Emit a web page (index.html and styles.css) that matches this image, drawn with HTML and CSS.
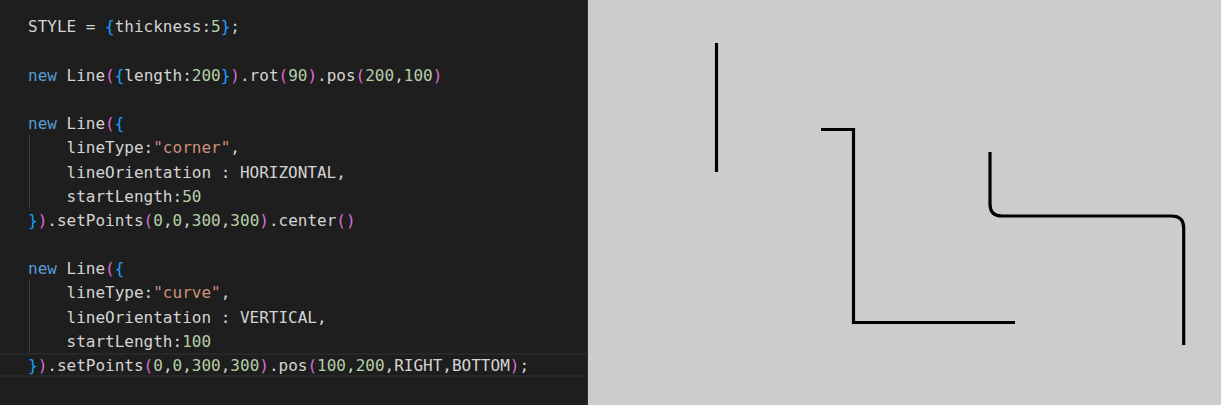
FILE: index.html
```html
<!DOCTYPE html>
<html>
<head>
<meta charset="utf-8">
<link rel="stylesheet" href="styles.css">
</head>
<body>
<div class="app">
  <div class="editor">
    <div class="line">STYLE = <span class="b2">{</span>thickness:<span class="n">5</span><span class="b2">}</span>;</div>
    <div class="line"></div>
    <div class="line"><span class="k">new</span> Line<span class="b1">(</span><span class="b2">{</span>length:<span class="n">200</span><span class="b2">}</span><span class="b1">)</span>.rot<span class="b1">(</span><span class="n">90</span><span class="b1">)</span>.pos<span class="b1">(</span><span class="n">200</span>,<span class="n">100</span><span class="b1">)</span></div>
    <div class="line"></div>
    <div class="line"><span class="k">new</span> Line<span class="b1">(</span><span class="b2">{</span></div>
    <div class="line guide">    lineType:<span class="s">"corner"</span>,</div>
    <div class="line guide">    lineOrientation : HORIZONTAL,</div>
    <div class="line guide">    startLength:<span class="n">50</span></div>
    <div class="line"><span class="b2">}</span><span class="b1">)</span>.setPoints<span class="b1">(</span><span class="n">0</span>,<span class="n">0</span>,<span class="n">300</span>,<span class="n">300</span><span class="b1">)</span>.center<span class="b1">()</span></div>
    <div class="line"></div>
    <div class="line"><span class="k">new</span> Line<span class="b1">(</span><span class="b2">{</span></div>
    <div class="line guide">    lineType:<span class="s">"curve"</span>,</div>
    <div class="line guide">    lineOrientation : VERTICAL,</div>
    <div class="line guide">    startLength:<span class="n">100</span></div>
    <div class="line current"><span class="b2">}</span><span class="b1">)</span>.setPoints<span class="b1">(</span><span class="n">0</span>,<span class="n">0</span>,<span class="n">300</span>,<span class="n">300</span><span class="b1">)</span>.pos<span class="b1">(</span><span class="n">100</span>,<span class="n">200</span>,RIGHT,BOTTOM<span class="b1">)</span>;</div>
  </div>
  <div class="stage">
    <svg class="drawing" width="633" height="405" viewBox="0 0 633 405">
      <g fill="none" stroke="#000" stroke-width="3.2">
        <path d="M128.5 43 V172" stroke-linecap="butt"/>
        <path d="M233 129.5 H265.5 V322.5 H427" stroke-linejoin="miter"/>
        <path d="M402 152 V204 Q402 216 414 216 H583.7 Q595.7 216 595.7 228 V345"/>
      </g>
    </svg>
  </div>
</div>
</body>
</html>
```

FILE: styles.css
```css
html, body {
  margin: 0;
  padding: 0;
  background: #1e1e1e;
}

.app {
  display: flex;
  width: 1221px;
  height: 405px;
  overflow: hidden;
}

.editor {
  width: 587px;
  flex: 0 0 587px;
  background: #1e1e1e;
  border-right: 1px solid #2e2e2e;
  padding-top: 14.4px;
  box-sizing: content-box;
  font-family: "DejaVu Sans Mono", "Liberation Mono", monospace;
  font-size: 16px;
  color: #d4d4d4;
}

.line {
  height: 24.2px;
  line-height: 22.2px;
  padding-top: 2px;
  padding-left: 28px;
  white-space: pre;
  box-sizing: border-box;
}

.line.guide {
  background: linear-gradient(#404040, #404040) no-repeat 29px 0 / 1px 100%;
}

.line.current {
  border-top: 2px solid #282828;
  border-bottom: 2px solid #282828;
  line-height: 18.2px;
}

.k { color: #569cd6; }
.n { color: #b5cea8; }
.s { color: #ce9178; }
.b1 { color: #da70d6; }
.b2 { color: #179fff; }

.stage {
  flex: 1 1 auto;
  background: #cccccc;
}

.drawing {
  display: block;
}
```
